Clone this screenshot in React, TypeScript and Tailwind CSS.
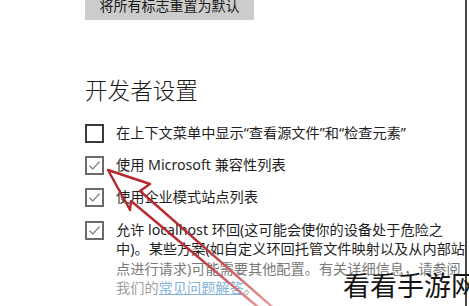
import type { ReactNode } from 'react';

const font = { fontFamily: '"Noto Sans", "Noto Sans CJK SC", sans-serif' };

function Check({ checked }: { checked: boolean }) {
  return (
    <div
      className={`relative h-[19px] w-[19px] flex-shrink-0 border-2 ${
        checked ? 'border-[#6b6b6b]' : 'border-[#3a3a3a]'
      } bg-white`}
    >
      {checked ? (
        <svg viewBox="0 0 15 15" className="absolute inset-0 h-[15px] w-[15px]">
          <path d="M2.5 7.8 L5.8 11 L12.6 3.6" fill="none" stroke="#777" strokeWidth="1.2" />
        </svg>
      ) : null}
    </div>
  );
}

function Row({ checked, children }: { checked: boolean; children: ReactNode }) {
  return (
    <div className="flex h-[20px] items-center gap-[12px]">
      <Check checked={checked} />
      <span className="whitespace-nowrap text-[14.2px] text-[#1f1f1f]">{children}</span>
    </div>
  );
}

export default function App() {
  return (
    <div className="relative flex h-[306px] w-[469px] overflow-hidden bg-white" style={font}>
      <div className="flex min-w-0 flex-1 flex-col overflow-hidden pl-[85px]">
        <button
          type="button"
          className="-mt-[10px] flex h-[30px] w-[169px] flex-shrink-0 items-center justify-center bg-[#cccccc] text-[14px] text-[#1a1a1a]"
        >
          将所有标志重置为默认
        </button>

        <h2 className="mt-[56px] text-[22.6px] leading-[30px] font-light text-[#1a1a1a]">开发者设置</h2>

        <div className="mt-[17px] flex flex-col gap-[12px]">
          <Row checked={false}>在上下文菜单中显示“查看源文件”和“检查元素”</Row>
          <Row checked>使用 Microsoft 兼容性列表</Row>
          <Row checked>使用企业模式站点列表</Row>
        </div>

        <div className="mt-[13px] flex items-start gap-[12px]">
          <div className="mt-[1px]">
            <Check checked />
          </div>
          <div className="whitespace-nowrap text-[14.2px] leading-[19.3px] text-[#1f1f1f]">
            <div>允许 localhost 环回(这可能会使你的设备处于危险之</div>
            <div>中)。某些方案(如自定义环回托管文件映射以及从内部站</div>
            <div className="text-[#7a7a7a]">点进行请求)可能需要其他配置。有关详细信息，请参阅</div>
            <div className="text-[#a0a0a0]">
              我们的<span className="text-[#86b4dc] underline">常见问题解答</span>。
            </div>
          </div>
        </div>
      </div>
      <div className="w-[2px] flex-shrink-0 bg-[#474747]" />
      <div className="w-[2px] flex-shrink-0 bg-white" />

      {/* red annotation arrow */}
      <svg className="pointer-events-none absolute inset-0" width="469" height="306" viewBox="0 0 469 306">
        <defs>
          <linearGradient id="arrowFade" x1="108" y1="170" x2="278" y2="306" gradientUnits="userSpaceOnUse">
            <stop offset="0" stopColor="#b3262a" />
            <stop offset="0.55" stopColor="#b83035" />
            <stop offset="1" stopColor="#e9a3a3" />
          </linearGradient>
        </defs>
        <polygon
          points="108,170 150,184 140,191 278,312 264,312 131,201 130,210"
          fill="none"
          stroke="url(#arrowFade)"
          strokeWidth="2.4"
          strokeLinejoin="round"
        />
      </svg>

      <div className="absolute left-[343px] top-[270px] whitespace-nowrap text-[27px] leading-[32px] text-[#151515]">
        看看手游网
      </div>
    </div>
  );
}
